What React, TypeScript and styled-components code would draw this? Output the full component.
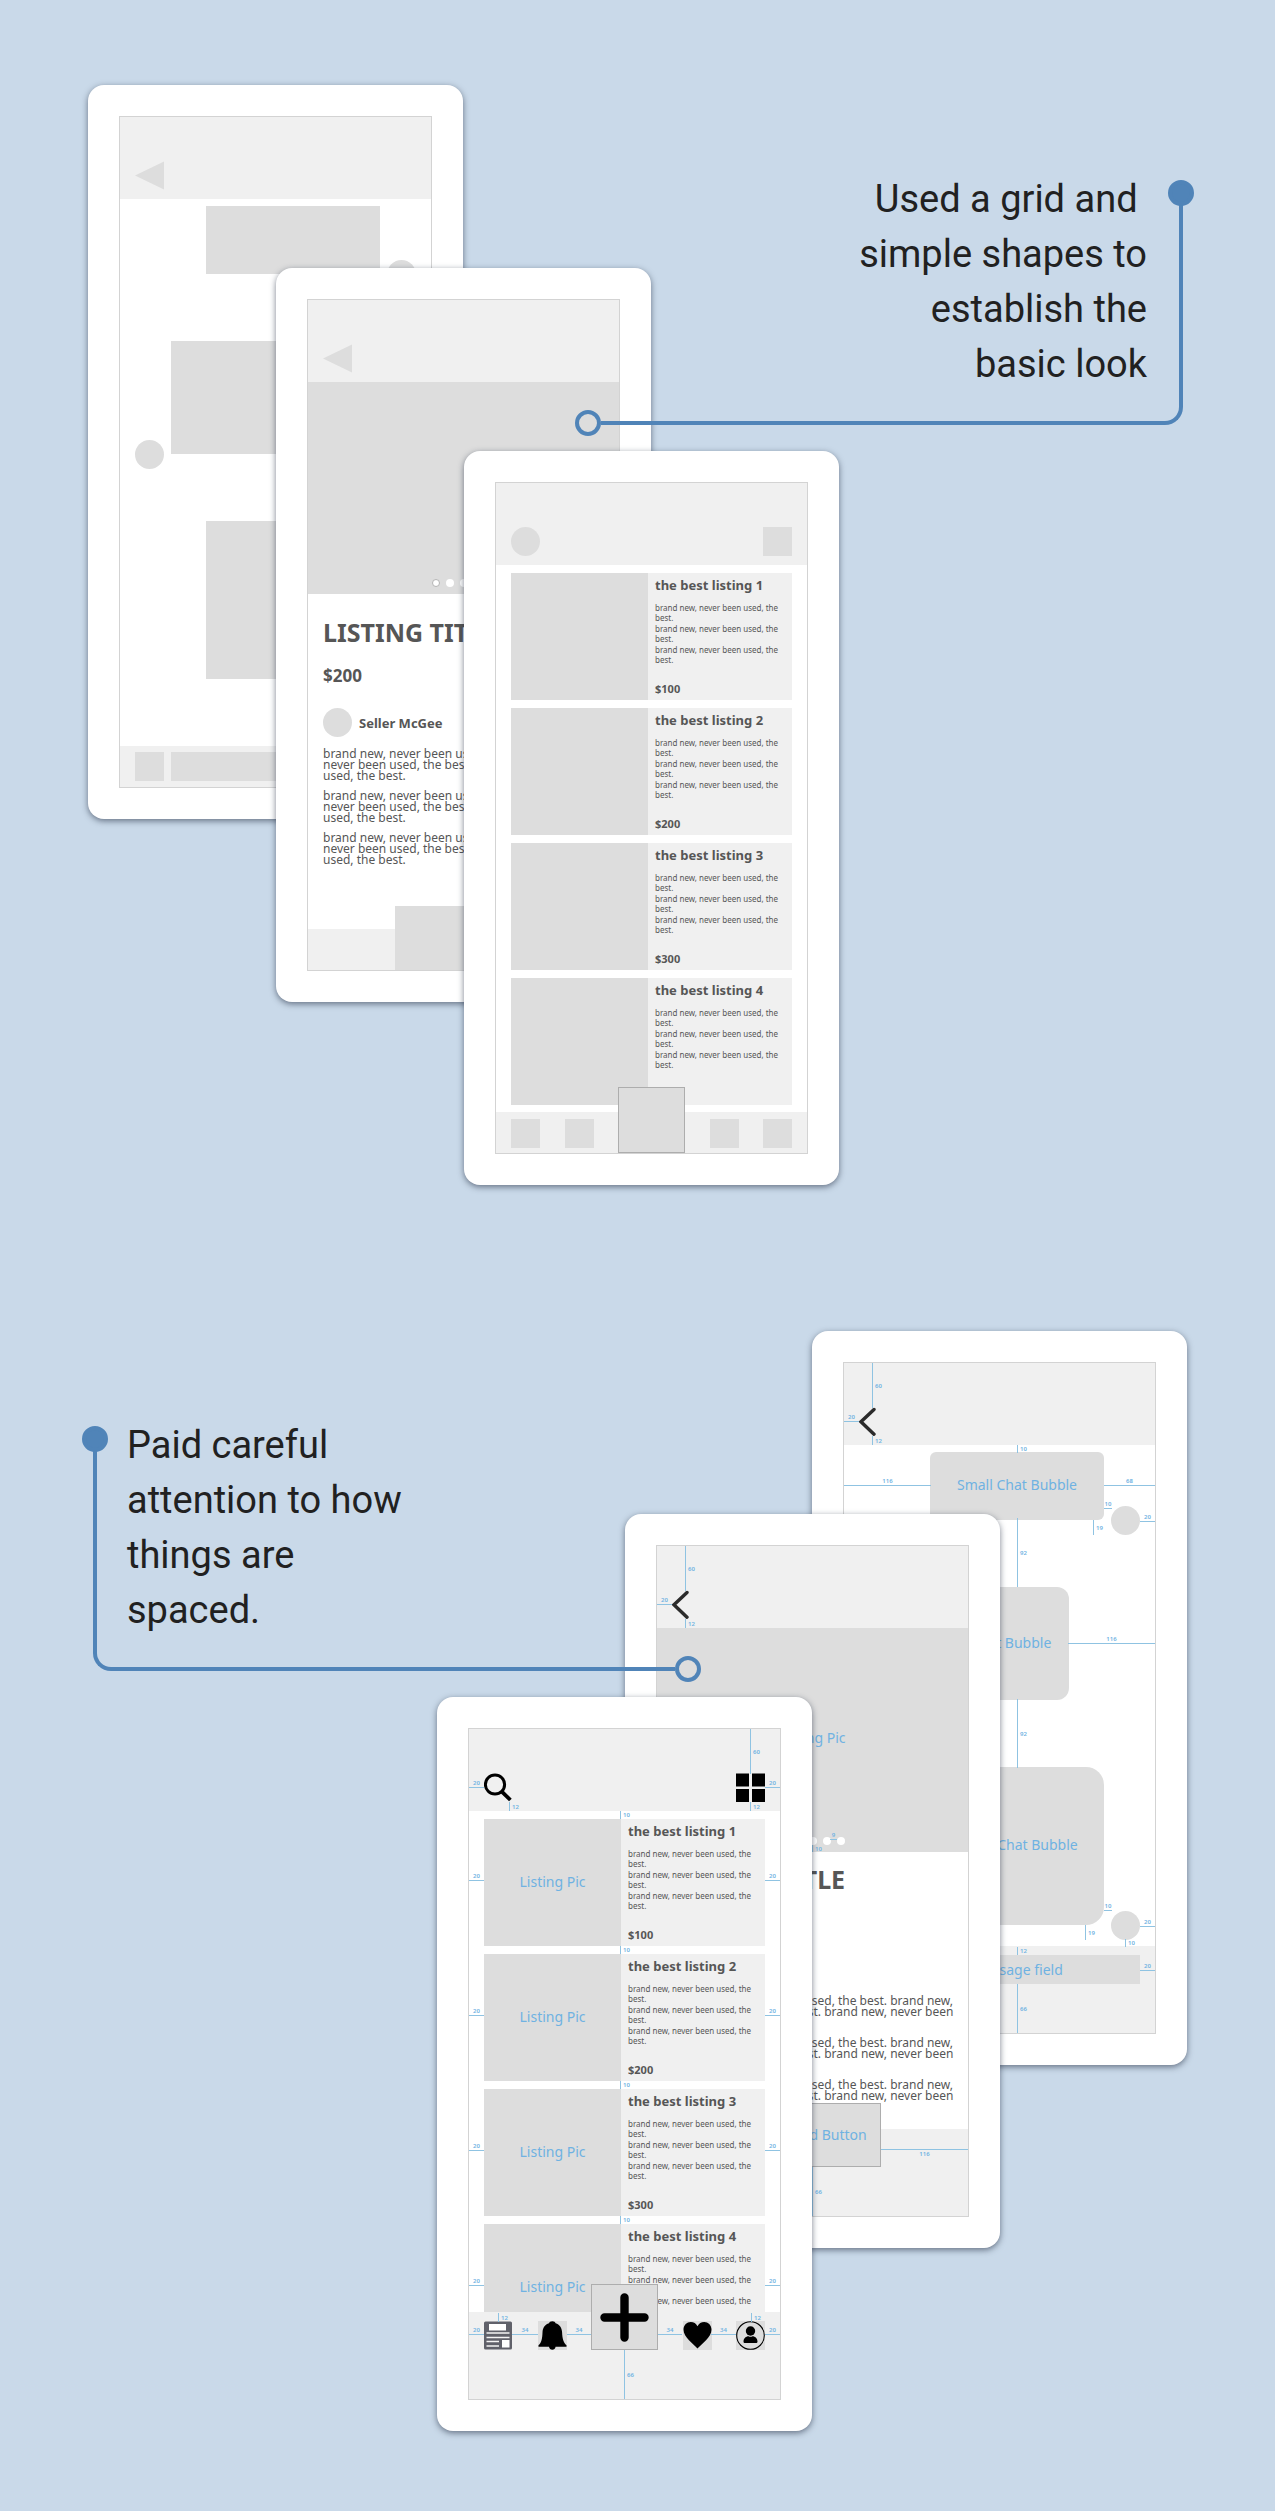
import React from "react";
import styled, { createGlobalStyle, css } from "styled-components";

const color = {
  page: "#c9d9e9",
  accent: "#5084b8",
  ink: "#212121",
  text: "#565656",
  bar: "#f0f0f0",
  block: "#dddddd",
  outline: "#d3d3d3",
  spec: "#6fb2e2",
  specLine: "#8fc3e2",
};

const GlobalStyle = createGlobalStyle`
  *, *::before, *::after { box-sizing: border-box; }
  body { margin: 0; background: ${color.page}; }
  h2, h3, p { margin: 0; }
  button, input { margin: 0; padding: 0; border: 0; border-radius: 0; font: inherit; }
`;

/* ---------- page ---------- */

const Page = styled.main`
  display: flex;
  flex-direction: column;
  gap: 146px;
  padding: 85px 88px 80px;
  font-family: "Noto Sans", sans-serif;
  color: ${color.text};
`;

const Stage = styled.section<{ $flip?: boolean }>`
  display: grid;
  grid-template-columns: ${(p) =>
    p.$flip ? "1fr 188px 187px 375px" : "188px 188px 375px 1fr"};
  grid-template-rows: 183px 183px 734px;
`;

/* ---------- phone ---------- */

const Phone = styled.article<{ $col: number; $row: number }>`
  isolation: isolate;
  grid-area: ${(p) => p.$row} / ${(p) => p.$col} / -1 / -1;
  align-self: start;
  justify-self: start;
  width: 375px;
  height: 734px;
  padding: 31px;
  border-radius: 16px;
  background: #fff;
  box-shadow: 0 2px 6px rgba(35, 45, 65, 0.6);
`;

const Screen = styled.div`
  position: relative;
  display: flex;
  flex-direction: column;
  height: 100%;
  border: 1px solid ${color.outline};
`;

const TopBar = styled.header`
  flex: none;
  display: flex;
  align-items: flex-end;
  justify-content: space-between;
  height: 82px;
  padding: 0 15px 9px;
  background: ${color.bar};
`;

const BottomBar = styled.footer<{ $tall?: boolean; $center?: boolean }>`
  flex: none;
  display: flex;
  align-items: flex-end;
  justify-content: ${(p) => (p.$center ? "center" : "space-between")};
  gap: 7px;
  height: ${(p) => (p.$tall ? 87 : 41)}px;
  padding: 0 15px ${(p) => (p.$tall ? 49 : 0)}px;
  background: ${color.bar};
`;

const IconButton = styled.button<{ $filled?: boolean; $round?: boolean; $lift?: number }>`
  flex: none;
  display: block;
  width: 29px;
  height: 29px;
  margin-bottom: ${(p) => p.$lift ?? 0}px;
  border-radius: ${(p) => (p.$round ? "50%" : "0")};
  background: ${(p) => (p.$filled ? color.block : "transparent")};
  svg { display: block; }
`;

const MainButton = styled.button<{ $wide?: boolean; $outlined?: boolean }>`
  flex: none;
  position: relative;
  display: flex;
  align-items: center;
  justify-content: center;
  width: ${(p) => (p.$wide ? 137 : 67)}px;
  height: ${(p) => (p.$wide ? 64 : 66)}px;
  border: ${(p) => (p.$outlined ? "1px solid #adadad" : "0")};
  background: ${color.block};
  color: ${color.spec};
  font-size: 14px;
  line-height: 20px;
  white-space: nowrap;
`;

/* ---------- spacing marks ---------- */

type MarkData = {
  dir: "h" | "v";
  x: number;
  y: number;
  len: number;
  text: string;
  below?: boolean;
};

const Mark = styled.span<{ $m: MarkData }>`
  position: absolute;
  display: flex;
  align-items: center;
  left: ${(p) => p.$m.x}px;
  top: ${(p) => p.$m.y}px;
  color: ${color.spec};
  font-size: 6px;
  font-weight: 600;
  line-height: 8px;
  white-space: nowrap;
  ${(p) =>
    p.$m.dir === "v"
      ? css`
          height: ${p.$m.len}px;
          padding-left: 2px;
          border-left: 1px solid ${color.specLine};
        `
      : css`
          justify-content: center;
          width: ${p.$m.len}px;
          ${p.$m.below
            ? `border-top: 1px solid ${color.specLine};`
            : `margin-top: -9px; border-bottom: 1px solid ${color.specLine};`}
        `}
`;

const Marks = ({ items }: { items: MarkData[] }) => (
  <>
    {items.map((m, i) => (
      <Mark key={i} $m={m}>
        {m.text}
      </Mark>
    ))}
  </>
);

/* ---------- icons ---------- */

const Svg = ({ size = 29, children }: { size?: number; children: React.ReactNode }) => (
  <svg width={size} height={size} viewBox={`0 0 ${size} ${size}`} aria-hidden="true">
    {children}
  </svg>
);

const TriangleIcon = () => (
  <Svg>
    <path d="M0 14.5 L29 0.5 V28.5 Z" fill={color.block} />
  </Svg>
);
const ChevronIcon = () => (
  <Svg>
    <path d="M15 2.5 L2 14.8 L15 27.2" fill="none" stroke="#2b2b2b" strokeWidth="3.4" strokeLinecap="round" />
  </Svg>
);
const SearchIcon = () => (
  <Svg>
    <circle cx="11" cy="11.5" r="9.6" fill="none" stroke="#000" strokeWidth="3" />
    <path d="M17.8 18.6 L26.4 27" stroke="#000" strokeWidth="3.8" />
  </Svg>
);
const GridIcon = () => (
  <Svg>
    <path d="M0 0.5h13v13h-13z M16 0.5h13v13h-13z M0 16h13v13h-13z M16 16h13v13h-13z" />
  </Svg>
);
const NewsIcon = () => (
  <Svg>
    <rect x="0" y="0.5" width="28" height="28" rx="1.5" fill="#60616a" />
    <rect x="5" y="3" width="17" height="6.5" fill="#fff" />
    <path d="M2.5 12h23 M2.5 16.5h23 M2.5 20.5h12.5 M2.5 25h12.5" stroke="#f4f4f4" strokeWidth="1.5" />
    <rect x="18" y="19" width="7.5" height="7.5" fill="#fff" />
  </Svg>
);
const BellIcon = () => (
  <Svg>
    <path d="M14.3 0.3c-1.8 0-3 .8-3.3 2C7 3.500 4.700 6.800 4.500 11.500C4.300 17 3.700 21.500 0.500 24.300V25.800H11c.3 1.800 1.600 3 3.300 3s3-1.200 3.300-3H28.500V24.300C25.300 21.500 24.300 17 24.100 11.500C23.900 6.800 21.600 3.500 17.600 2.300C17.300 1.100 16.100 .3 14.300 .3z" />
  </Svg>
);
const HeartIcon = () => (
  <Svg>
    <path d="M14.500 27.500C10.500 23 .5 16.500 .5 8.800C.5 4 4 1 7.700 1C10.800 1 13.200 2.600 14.500 5.200C15.800 2.600 18.200 1 21.300 1C25 1 28.500 4 28.500 8.800C28.500 16.500 18.500 23 14.500 27.500z" />
  </Svg>
);
const UserIcon = () => (
  <Svg>
    <circle cx="14.5" cy="14.5" r="13.8" fill="none" stroke="#000" strokeWidth="1.1" />
    <circle cx="14.5" cy="10" r="4.7" />
    <path d="M7.500 20.500c0-3.200 2.500-5.300 5-5.300c1.200.7 2.800.7 4 0c2.500 0 5 2.100 5 5.300c0 1-.6 1.600-1.600 1.600h-10.800c-1 0-1.600-.6-1.600-1.600z" />
  </Svg>
);
const PlusIcon = () => (
  <Svg size={51}>
    <path d="M25.500 5.500V45.500 M5.500 25.500H45.500" stroke="#000" strokeWidth="8.4" strokeLinecap="round" />
  </Svg>
);

/* ---------- chat screen ---------- */

const ChatBody = styled.div`
  flex: 1;
  display: flex;
  flex-direction: column;
  gap: 52px;
  min-height: 0;
  padding: 7px 15px 0;
`;

const Message = styled.div<{ $own?: boolean }>`
  display: flex;
  flex-direction: ${(p) => (p.$own ? "row" : "row-reverse")};
  justify-content: flex-end;
  align-items: flex-end;
  gap: 7px;
`;

const Avatar = styled.span`
  flex: none;
  width: 29px;
  height: 29px;
  border-radius: 50%;
  background: ${color.block};
`;

const Bubble = styled.p<{ $h: number; $radius: number }>`
  display: flex;
  align-items: center;
  justify-content: center;
  width: 174px;
  height: ${(p) => p.$h}px;
  margin-bottom: 15px;
  border-radius: ${(p) => p.$radius}px;
  background: ${color.block};
  color: ${color.spec};
  font-size: 14px;
  line-height: 20px;
  padding-bottom: 2px;
  white-space: nowrap;
`;

const MessageField = styled.input<{ $lift?: number }>`
  flex: 1;
  min-width: 0;
  height: 29px;
  margin-bottom: ${(p) => p.$lift ?? 0}px;
  background: ${color.block};
  text-align: center;
  font-size: 14px;
  &::placeholder { color: ${color.spec}; opacity: 1; }
`;

const chatMarks: MarkData[] = [
  { dir: "v", x: 28, y: 0, len: 45, text: "60" },
  { dir: "h", x: 0, y: 59, len: 15, text: "20" },
  { dir: "v", x: 28, y: 73, len: 9, text: "12" },
  { dir: "v", x: 173, y: 82, len: 8, text: "10" },
  { dir: "h", x: 0, y: 123, len: 87, text: "116" },
  { dir: "h", x: 260, y: 123, len: 51, text: "68" },
  { dir: "h", x: 260, y: 146, len: 8, text: "10" },
  { dir: "h", x: 296, y: 159, len: 15, text: "20" },
  { dir: "v", x: 249, y: 157, len: 15, text: "19" },
  { dir: "v", x: 173, y: 155, len: 69, text: "92" },
  { dir: "h", x: 224, y: 281, len: 87, text: "116" },
  { dir: "v", x: 173, y: 336, len: 69, text: "92" },
  { dir: "h", x: 260, y: 548, len: 8, text: "10" },
  { dir: "v", x: 241, y: 562, len: 15, text: "19" },
  { dir: "h", x: 296, y: 564, len: 15, text: "20" },
  { dir: "v", x: 281, y: 576, len: 8, text: "10" },
  { dir: "v", x: 173, y: 584, len: 8, text: "12" },
  { dir: "h", x: 296, y: 608, len: 15, text: "20" },
  { dir: "v", x: 173, y: 621, len: 49, text: "66" },
];

const chatBubbles = [
  { h: 68, radius: 6, own: true, label: "Small Chat Bubble" },
  { h: 113, radius: 12, own: false, label: "Medium Chat Bubble" },
  { h: 158, radius: 18, own: true, label: "Large Chat Bubble" },
];

const ChatScreen = ({ spec }: { spec?: boolean }) => (
  <Screen>
    <TopBar>
      <IconButton aria-label="Back">{spec ? <ChevronIcon /> : <TriangleIcon />}</IconButton>
    </TopBar>
    <ChatBody>
      {chatBubbles.map((b) => (
        <Message key={b.label} $own={b.own}>
          <Bubble $h={b.h} $radius={spec ? b.radius : 0}>
            {spec && b.label}
          </Bubble>
          <Avatar />
        </Message>
      ))}
    </ChatBody>
    <BottomBar $tall={spec}>
      <IconButton aria-label="Attach" $filled $lift={spec ? 0 : 6} />
      <MessageField
        aria-label="Message"
        placeholder={spec ? "Message field" : undefined}
        $lift={spec ? 0 : 6}
      />
    </BottomBar>
    {spec && <Marks items={chatMarks} />}
  </Screen>
);

/* ---------- listing detail screen ---------- */

const Hero = styled.div<{ $tall?: boolean }>`
  position: relative;
  flex: none;
  display: flex;
  align-items: center;
  justify-content: center;
  height: ${(p) => (p.$tall ? 224 : 212)}px;
  padding-bottom: 4px;
  background: ${color.block};
  color: ${color.spec};
  font-size: 14px;
  line-height: 20px;
`;

const Dots = styled.div`
  position: absolute;
  left: 0;
  right: 0;
  bottom: 7px;
  display: flex;
  justify-content: center;
  gap: 6px;
`;

const Dot = styled.span<{ $current?: boolean }>`
  width: 8px;
  height: 8px;
  border: ${(p) => (p.$current ? "1px solid #b4b4b4" : "0")};
  border-radius: 50%;
  background: #fff;
`;

const Detail = styled.div<{ $tight?: boolean }>`
  flex: 1;
  min-height: 0;
  padding: ${(p) => (p.$tight ? 11 : 22)}px 15px 0;
  white-space: nowrap;
`;

const DetailTitle = styled.h2`
  font-size: 25px;
  line-height: 32px;
`;

const DetailPrice = styled.p`
  margin-top: 16px;
  font-size: 17px;
  font-weight: 700;
  line-height: 24px;
`;

const Seller = styled.div`
  display: flex;
  align-items: center;
  gap: 7px;
  margin: 20px 0 11px;
  font-size: 13px;
  font-weight: 700;
  line-height: 20px;
`;

const Description = styled.p`
  margin-bottom: 9px;
  font-size: 12px;
  line-height: 11px;
`;

const detailMarks: MarkData[] = [
  { dir: "v", x: 28, y: 0, len: 45, text: "60" },
  { dir: "h", x: 0, y: 59, len: 15, text: "20" },
  { dir: "v", x: 28, y: 73, len: 9, text: "12" },
  { dir: "v", x: 155, y: 299, len: 7, text: "10" },
  { dir: "h", x: 173, y: 294, len: 7, text: "9" },
  { dir: "h", x: 224, y: 603, len: 87, text: "116", below: true },
  { dir: "v", x: 155, y: 621, len: 49, text: "66" },
];

const DetailScreen = ({ spec }: { spec?: boolean }) => (
  <Screen>
    <TopBar>
      <IconButton aria-label="Back">{spec ? <ChevronIcon /> : <TriangleIcon />}</IconButton>
    </TopBar>
    <Hero $tall={spec}>
      {spec && "Listing Pic"}
      <Dots>
        {[0, 1, 2, 3, 4].map((n) => (
          <Dot key={n} $current={n === 0} />
        ))}
      </Dots>
    </Hero>
    <Detail $tight={spec}>
      <DetailTitle>LISTING TITLE</DetailTitle>
      <DetailPrice>$200</DetailPrice>
      <Seller>
        <Avatar />
        Seller McGee
      </Seller>
      {[0, 1, 2].map((n) => (
        <Description key={n}>
          brand new, never been used, the best. brand new,
          <br />
          never been used, the best. brand new, never been
          <br />
          used, the best.
        </Description>
      ))}
    </Detail>
    <BottomBar $tall={spec} $center>
      <MainButton $wide $outlined={spec} aria-label="Standard Button">
        {spec && "Standard Button"}
      </MainButton>
    </BottomBar>
    {spec && <Marks items={detailMarks} />}
  </Screen>
);

/* ---------- listings screen ---------- */

const List = styled.div`
  flex: 1;
  display: flex;
  flex-direction: column;
  gap: 8px;
  min-height: 0;
  padding: 8px 15px 0;
  overflow: hidden;
`;

const Card = styled.article`
  position: relative;
  flex: none;
  display: grid;
  grid-template-columns: 137px 1fr;
  height: 127px;
  background: ${color.bar};
`;

const CardPicture = styled.div`
  display: flex;
  align-items: center;
  justify-content: center;
  padding-bottom: 2px;
  background: ${color.block};
  color: ${color.spec};
  font-size: 14px;
  line-height: 20px;
`;

const CardInfo = styled.div`
  display: flex;
  flex-direction: column;
  padding: 2px 0 3px 7px;
  white-space: nowrap;
`;

const CardTitle = styled.h3`
  margin-bottom: 8px;
  font-size: 13px;
  line-height: 20px;
`;

const CardText = styled.p`
  margin-bottom: 1px;
  font-size: 8px;
  line-height: 10px;
`;

const CardPrice = styled.p`
  margin-top: auto;
  font-size: 11px;
  font-weight: 700;
  line-height: 16px;
`;

const cardMarks: MarkData[] = [
  { dir: "v", x: 136, y: -8, len: 8, text: "10" },
  { dir: "h", x: -15, y: 62, len: 15, text: "20" },
  { dir: "h", x: 281, y: 62, len: 15, text: "20" },
];

const listMarks: MarkData[] = [
  { dir: "v", x: 281, y: 0, len: 45, text: "60" },
  { dir: "h", x: 0, y: 59, len: 15, text: "20" },
  { dir: "h", x: 296, y: 59, len: 15, text: "20" },
  { dir: "v", x: 40, y: 73, len: 9, text: "12" },
  { dir: "v", x: 281, y: 73, len: 9, text: "12" },
  { dir: "v", x: 29, y: 584, len: 9, text: "12" },
  { dir: "v", x: 282, y: 584, len: 9, text: "12" },
  { dir: "h", x: 0, y: 606, len: 15, text: "20" },
  { dir: "h", x: 43, y: 606, len: 26, text: "34" },
  { dir: "h", x: 98, y: 606, len: 24, text: "34" },
  { dir: "h", x: 189, y: 606, len: 24, text: "34" },
  { dir: "h", x: 242, y: 606, len: 25, text: "34" },
  { dir: "h", x: 296, y: 606, len: 15, text: "20" },
  { dir: "v", x: 155, y: 621, len: 49, text: "66" },
];

const ListScreen = ({ spec }: { spec?: boolean }) => (
  <Screen>
    <TopBar>
      <IconButton aria-label="Search" $filled={!spec} $round={!spec}>
        {spec && <SearchIcon />}
      </IconButton>
      <IconButton aria-label="Grid view" $filled={!spec}>
        {spec && <GridIcon />}
      </IconButton>
    </TopBar>
    <List>
      {[1, 2, 3, 4].map((n) => (
        <Card key={n}>
          <CardPicture>{spec && "Listing Pic"}</CardPicture>
          <CardInfo>
            <CardTitle>the best listing {n}</CardTitle>
            {[0, 1, 2].map((k) => (
              <CardText key={k}>
                brand new, never been used, the
                <br />
                best.
              </CardText>
            ))}
            <CardPrice>${n}00</CardPrice>
          </CardInfo>
          {spec && <Marks items={cardMarks} />}
        </Card>
      ))}
    </List>
    <BottomBar $tall={spec}>
      <IconButton aria-label="Feed" $filled={!spec} $lift={spec ? 0 : 5}>
        {spec && <NewsIcon />}
      </IconButton>
      <IconButton aria-label="Alerts" $filled $lift={spec ? 0 : 5}>
        {spec && <BellIcon />}
      </IconButton>
      <MainButton aria-label="New listing" $outlined>
        {spec && <PlusIcon />}
      </MainButton>
      <IconButton aria-label="Favorites" $filled $lift={spec ? 0 : 5}>
        {spec && <HeartIcon />}
      </IconButton>
      <IconButton aria-label="Profile" $filled $lift={spec ? 0 : 5}>
        {spec && <UserIcon />}
      </IconButton>
    </BottomBar>
    {spec && <Marks items={listMarks} />}
  </Screen>
);

/* ---------- callouts ---------- */

const Callout = styled.div<{ $flip?: boolean }>`
  z-index: 1;
  display: grid;
  align-self: start;
  ${(p) =>
    p.$flip
      ? "grid-area: 1 / 1 / 3 / 4; margin: 87px 137px 0 5px;"
      : "grid-area: 1 / 3 / 3 / 5; margin: 87px 4px 0 137px;"}
`;

const CalloutText = styled.p<{ $flip?: boolean }>`
  grid-area: 1 / 1;
  padding: 0 36px 33px;
  padding-left: 34px;
  text-align: ${(p) => (p.$flip ? "left" : "right")};
  color: ${color.ink};
  font-family: Roboto, sans-serif;
  font-size: 38px;
  line-height: 55px;
`;

const Connector = styled.span<{ $flip?: boolean }>`
  grid-area: 1 / 1;
  position: relative;
  margin-top: 21px;
  border: 0 solid ${color.accent};
  border-bottom-width: 4px;
  ${(p) =>
    p.$flip
      ? "border-left-width: 4px; border-bottom-left-radius: 18px;"
      : "border-right-width: 4px; border-bottom-right-radius: 18px;"}

  &::before,
  &::after {
    content: "";
    position: absolute;
    width: 26px;
    height: 26px;
    border: 4px solid ${color.accent};
    border-radius: 50%;
  }
  &::before {
    top: -13px;
    ${(p) => (p.$flip ? "left" : "right")}: -15px;
    background: ${color.accent};
  }
  &::after {
    bottom: -15px;
    ${(p) => (p.$flip ? "right" : "left")}: -26px;
  }
`;

export default function App() {
  return (
    <Page>
      <GlobalStyle />
      <Stage>
        <Phone $col={1} $row={1}>
          <ChatScreen />
        </Phone>
        <Phone $col={2} $row={2}>
          <DetailScreen />
        </Phone>
        <Phone $col={3} $row={3}>
          <ListScreen />
        </Phone>
        <Callout>
          <Connector />
          <CalloutText>
            Used a grid and&nbsp;
            <br />
            simple shapes to
            <br />
            establish the
            <br />
            basic look
          </CalloutText>
        </Callout>
      </Stage>
      <Stage $flip>
        <Phone $col={4} $row={1}>
          <ChatScreen spec />
        </Phone>
        <Phone $col={3} $row={2}>
          <DetailScreen spec />
        </Phone>
        <Phone $col={2} $row={3}>
          <ListScreen spec />
        </Phone>
        <Callout $flip>
          <Connector $flip />
          <CalloutText $flip>
            Paid careful
            <br />
            attention to how
            <br />
            things are
            <br />
            spaced.
          </CalloutText>
        </Callout>
      </Stage>
    </Page>
  );
}
